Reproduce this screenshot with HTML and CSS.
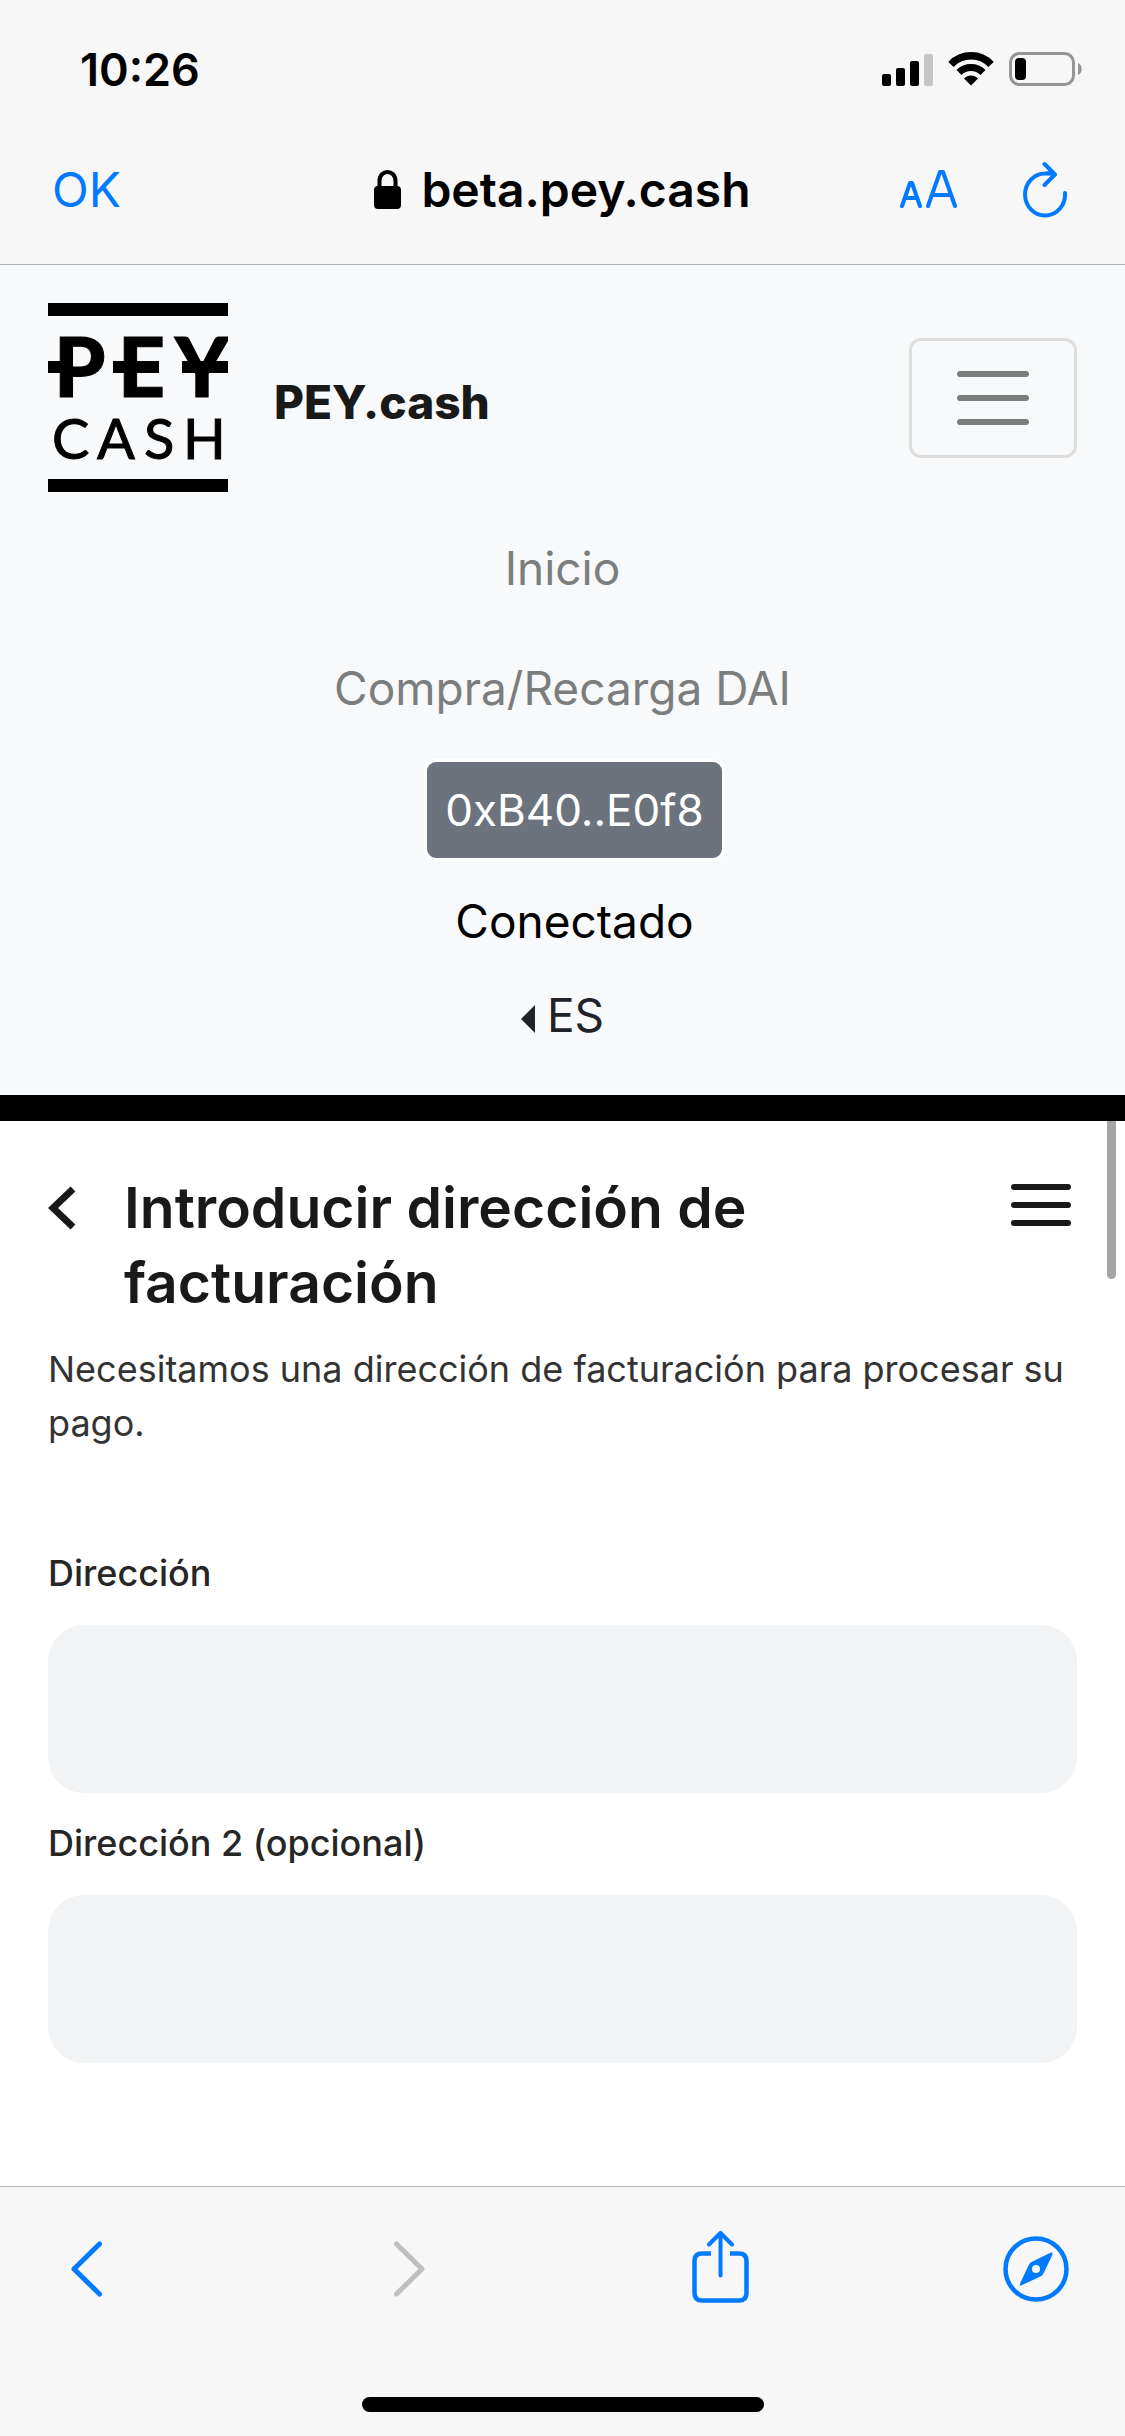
FILE: index.html
```html
<!DOCTYPE html>
<html lang="es">
<head>
  <meta charset="UTF-8">
  <meta name="viewport" content="width=device-width, initial-scale=1.0">
  <title>PEY.cash</title>
  <link rel="stylesheet" href="styles.css">
</head>
<body>

  <header class="browser-top">
    <div class="status-bar">
      <span class="clock">10:26</span>
      <div class="status-icons">
        <svg width="51" height="33" viewBox="0 0 51 33">
          <rect x="0" y="21" width="9" height="12" rx="2"/>
          <rect x="14" y="15" width="9" height="18" rx="2"/>
          <rect x="28" y="8" width="9" height="25" rx="2"/>
          <rect x="42" y="1" width="9" height="32" rx="2" fill="#c5c5c5"/>
        </svg>
        <svg width="46" height="34" viewBox="0 0 46 34">
          <path d="M3 12.500A27.500 27.500 0 0 1 43 12.500" fill="none" stroke="#000" stroke-width="7.500"/>
          <path d="M11 20.500A17 17 0 0 1 35 20.500" fill="none" stroke="#000" stroke-width="7"/>
          <path d="M23 33.500L16 26.500A9.500 9.500 0 0 1 30 26.500Z"/>
        </svg>
        <svg width="74" height="34" viewBox="0 0 74 34">
          <rect x="1.500" y="1.500" width="63" height="31" rx="9" fill="none" stroke="#959595" stroke-width="3"/>
          <rect x="6" y="6" width="11" height="22" rx="4"/>
          <path d="M69 11C74 13 74 21 69 23Z" fill="#959595"/>
        </svg>
      </div>
    </div>
    <div class="address-bar">
      <button class="bar-button ok-button">OK</button>
      <div class="address">
        <svg width="27" height="39" viewBox="0 0 27 39">
          <rect x="0" y="16" width="27" height="23" rx="4"/>
          <path d="M5.500 18V11C5.500-1 21.500-1 21.500 11V18" fill="none" stroke="#000" stroke-width="4"/>
        </svg>
        <span>beta.pey.cash</span>
      </div>
      <div class="address-actions">
        <button class="bar-button" aria-label="Tamaño del texto">
          <svg width="58" height="60" viewBox="0 0 58 60">
            <path d="M2 47L10 24H12L20 47M5 39H17M28 47L40 13H43L55 47M32 36H51" fill="none" stroke="#007aff" stroke-width="4" stroke-linecap="round" stroke-linejoin="round"/>
          </svg>
        </button>
        <button class="bar-button" aria-label="Recargar">
          <svg width="50" height="60" viewBox="0 0 50 60">
            <path d="M42 34A20 21 0 1 1 22 14.500Q27 14 32 15.500M21.500 5L32 15.500L21.500 26" fill="none" stroke="#007aff" stroke-width="4" stroke-linecap="round" stroke-linejoin="round"/>
          </svg>
        </button>
      </div>
    </div>
  </header>

  <nav class="navbar">
    <div class="navbar-head">
      <a class="brand" href="#">
        <svg class="logo" viewBox="0 0 180 189">
          <rect x="0" y="0" width="180" height="13"/>
          <text class="logo-pey" y="94" x="6 70 127">PEY</text>
          <rect x="0" y="58" width="23" height="12"/>
          <rect x="65" y="58" width="46" height="12"/>
          <rect x="134" y="58" width="46" height="12"/>
          <text class="logo-cash" y="156" x="4 49 96 135">CASH</text>
          <rect x="0" y="176" width="180" height="13"/>
        </svg>
        <span class="brand-name">PEY.cash</span>
      </a>
      <button class="toggler" aria-label="Menú">
        <svg width="72" height="54" viewBox="0 0 72 54">
          <path d="M3 3H69M3 27H69M3 51H69" stroke="#7c7d7d" stroke-width="6" stroke-linecap="round"/>
        </svg>
      </button>
    </div>
    <div class="navbar-links">
      <a class="nav-link" href="#">Inicio</a>
      <a class="nav-link" href="#">Compra/Recarga DAI</a>
    </div>
    <div class="wallet">
      <button class="wallet-button">0xB40..E0f8</button>
      <span class="wallet-state">Conectado</span>
    </div>
    <a class="language" href="#"><span class="caret"></span>ES</a>
  </nav>

  <main class="checkout">
    <div class="scrollbar"></div>
    <div class="checkout-head">
      <button class="icon-button" aria-label="Atrás">
        <svg width="28" height="75" viewBox="0 0 28 75">
          <path d="M25 19L5 38L25 57" fill="none" stroke="#191919" stroke-width="7"/>
        </svg>
      </button>
      <h1>Introducir dirección de facturación</h1>
      <button class="icon-button" aria-label="Opciones">
        <svg width="66" height="75" viewBox="0 0 66 75">
          <path d="M3 17H57M3 35H57M3 53H57" stroke="#191919" stroke-width="6" stroke-linecap="round"/>
        </svg>
      </button>
    </div>
    <p class="intro">Necesitamos una dirección de facturación para procesar su pago.</p>
    <form class="address-form">
      <div class="field">
        <label for="direccion">Dirección</label>
        <input type="text" id="direccion">
      </div>
      <div class="field">
        <label for="direccion2">Dirección 2 (opcional)</label>
        <input type="text" id="direccion2">
      </div>
    </form>
  </main>

  <footer class="browser-bottom">
    <div class="toolbar">
      <button class="bar-button" aria-label="Anterior">
        <svg width="31" height="74" viewBox="0 0 31 74">
          <path d="M28.500 13L3 38L28.500 63" fill="none" stroke="#007aff" stroke-width="5" stroke-linecap="round" stroke-linejoin="round"/>
        </svg>
      </button>
      <button class="bar-button" aria-label="Siguiente" disabled>
        <svg width="31" height="74" viewBox="0 0 31 74">
          <path d="M2.500 13L28 38L2.500 63" fill="none" stroke="#bfbfbf" stroke-width="5" stroke-linecap="round" stroke-linejoin="round"/>
        </svg>
      </button>
      <button class="bar-button" aria-label="Compartir">
        <svg width="57" height="74" viewBox="0 0 57 74">
          <path d="M19 22.500H10Q2.500 22.500 2.500 30V62Q2.500 69.500 10 69.500H47Q54.500 69.500 54.500 62V30Q54.500 22.500 47 22.500H38" fill="none" stroke="#007aff" stroke-width="4.500"/>
          <path d="M28.500 44.500V3M17 13.500L28.500 2L40 13.500" fill="none" stroke="#007aff" stroke-width="4" stroke-linecap="round" stroke-linejoin="round"/>
        </svg>
      </button>
      <button class="bar-button" aria-label="Abrir en Safari">
        <svg width="66" height="74" viewBox="0 0 66 74">
          <circle cx="33" cy="38" r="30.500" fill="none" stroke="#007aff" stroke-width="4.500"/>
          <path d="M48 21.500Q50 21 49.500 23.500L40.500 42.500Q39.500 44.500 37.500 45.500L18 54.500Q16 55 17 52.500L26 33.500Q27 31.500 28.500 31Z" fill="#007aff"/>
          <circle cx="33" cy="38" r="4" fill="#f7f7f7"/>
        </svg>
      </button>
    </div>
    <div class="home-indicator"></div>
  </footer>

</body>
</html>
```

FILE: styles.css
```css
* {
  box-sizing: border-box;
}

body {
  margin: 0;
  min-height: 100vh;
  display: flex;
  flex-direction: column;
  font-family: Inter, "Liberation Sans", sans-serif;
  background-color: #fff;
  color: #191919;
}

button {
  font-family: inherit;
  background: none;
  border: none;
  padding: 0;
  cursor: pointer;
}

a {
  text-decoration: none;
}

svg {
  display: block;
}

/* browser bars */
.browser-top {
  background-color: #f7f7f7;
  border-bottom: 1px solid #b2b2b2;
  color: #000;
}

.status-bar {
  display: flex;
  align-items: center;
  justify-content: space-between;
  height: 114px;
  padding: 24px 42px 0 80px;
}

.clock {
  font-size: 45px;
  font-weight: 600;
}

.status-icons {
  display: flex;
  align-items: center;
  gap: 15px;
}

.address-bar {
  display: grid;
  grid-template-columns: 1fr auto 1fr;
  align-items: center;
  height: 150px;
  padding: 0 52px;
}

.bar-button {
  color: #007aff;
}

.ok-button {
  justify-self: start;
  font-size: 48px;
}

.address {
  display: flex;
  align-items: center;
  gap: 20px;
  font-size: 48px;
  font-weight: 600;
}

.address-actions {
  display: flex;
  justify-content: flex-end;
  gap: 65px;
}

/* site navbar */
.navbar {
  padding: 38px 48px 44px;
  background-color: #f8f9fb;
  border-bottom: 26px solid #000;
  font-size: 46px;
  line-height: 72px;
  text-align: center;
}

.navbar-head {
  display: flex;
  align-items: center;
  justify-content: space-between;
  margin-bottom: 16px;
}

.brand {
  display: flex;
  align-items: center;
  gap: 46px;
  color: #191919;
}

.brand-name {
  padding-top: 8px;
  font-weight: 800;
}

.logo {
  width: 180px;
  height: 189px;
}

.logo-pey {
  font-family: Lato, sans-serif;
  font-size: 82px;
  font-weight: 900;
  stroke: #000;
  stroke-width: 1px;
}

.logo-cash {
  font-family: Lato, sans-serif;
  font-size: 56px;
  font-weight: 400;
  stroke: #000;
  stroke-width: 1px;
}

.toggler {
  padding: 30px 45px;
  border: 3px solid #dedede;
  border-radius: 12px;
}

.navbar-links,
.wallet {
  display: flex;
  flex-direction: column;
  align-items: center;
}

.nav-link {
  padding: 24px;
  color: #7c7d7d;
}

.wallet {
  gap: 24px;
  margin: 11px 0 22px 24px;
  color: #000;
}

.wallet-button {
  padding: 12px 18px;
  border: 3px solid #fff;
  border-radius: 12px;
  background-color: #6c737c;
  color: #fff;
  font-size: 44px;
  line-height: 72px;
}

.language {
  display: flex;
  align-items: center;
  justify-content: center;
  gap: 12px;
  color: #212329;
}

.caret {
  margin-top: 8px;
  border: 14px solid transparent;
  border-left: 0;
  border-right-color: #212329;
}

/* checkout */
.checkout {
  flex: 1;
  position: relative;
  padding: 49px 48px;
}

.scrollbar {
  position: absolute;
  top: 0;
  right: 9px;
  width: 9px;
  height: 158px;
  border-radius: 0 0 5px 5px;
  background-color: #a5a5a5;
}

.checkout-head {
  display: flex;
  align-items: flex-start;
  gap: 48px;
}

.icon-button {
  flex: none;
}

h1 {
  flex: 1;
  margin: 0;
  font-size: 57px;
  font-weight: 600;
  line-height: 75px;
}

.intro {
  margin: 22px 0 96px;
  color: #333;
  font-size: 36px;
  line-height: 54px;
}

.address-form {
  display: flex;
  flex-direction: column;
  gap: 23px;
}

.field {
  display: flex;
  flex-direction: column;
  gap: 25px;
}

label {
  color: #262626;
  font-size: 36px;
  font-weight: 500;
  line-height: 54px;
}

input {
  width: 100%;
  height: 168px;
  padding: 0 36px;
  border: none;
  border-radius: 36px;
  background-color: #f2f3f5;
  font-family: inherit;
  font-size: 36px;
}

/* bottom toolbar */
.browser-bottom {
  display: flex;
  flex-direction: column;
  align-items: center;
  gap: 92px;
  padding: 44px 0 24px;
  border-top: 1px solid #b2b2b2;
  background-color: #f7f7f7;
}

.toolbar {
  display: grid;
  grid-template-columns: 323fr 298fr 311fr auto;
  justify-items: start;
  width: 100%;
  padding: 0 56px 0 71px;
}

.home-indicator {
  width: 402px;
  height: 15px;
  border-radius: 8px;
  background-color: #000;
}
```
